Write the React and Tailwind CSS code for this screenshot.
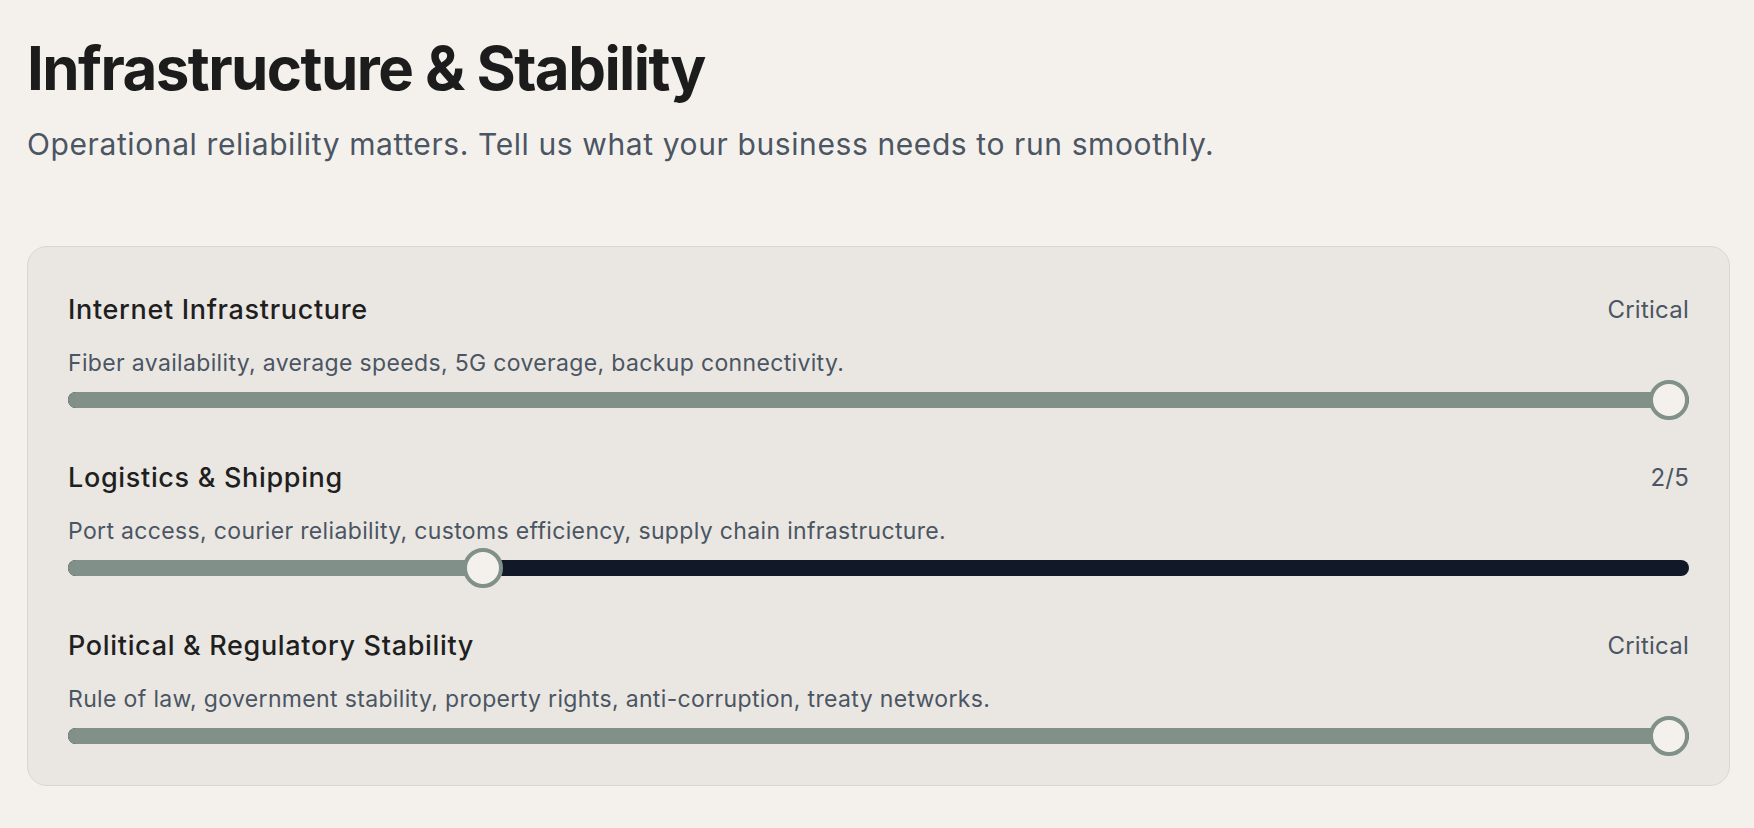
import { useState } from 'react';

const factors = [
  {
    id: 'internet',
    title: 'Internet Infrastructure',
    desc: 'Fiber availability, average speeds, 5G coverage, backup connectivity.',
    value: 5,
  },
  {
    id: 'logistics',
    title: 'Logistics & Shipping',
    desc: 'Port access, courier reliability, customs efficiency, supply chain infrastructure.',
    value: 2,
  },
  {
    id: 'political',
    title: 'Political & Regulatory Stability',
    desc: 'Rule of law, government stability, property rights, anti-corruption, treaty networks.',
    value: 5,
  },
];

function Slider({ value, min = 1, max = 5 }) {
  const pct = (value - min) / (max - min);
  // thumb stays inside the track: centre travels from 20px to (100% - 20px)
  const pos = `calc(20px + (100% - 40px) * ${pct})`;
  return (
    <div className="relative h-10 flex items-center">
      <div className="relative w-full h-4 rounded-full bg-[#111827] overflow-hidden">
        <div className="absolute left-0 top-0 h-full bg-[#819089]" style={{ width: pos }} />
      </div>
      <div
        className="absolute top-0 w-10 h-10 -ml-5 rounded-full bg-[#f4f1ec] border-4 border-[#819089]"
        style={{ left: pos }}
      />
    </div>
  );
}

export default function App() {
  const [items] = useState(factors);

  return (
    <div className="min-h-screen bg-[#f4f1ec] pl-[27px] pr-[24px] pt-[38px] pb-10 font-['Inter',sans-serif]">
      <h1 className="text-6xl font-bold tracking-[-0.026em] text-[#1c1c1c]">Infrastructure &amp; Stability</h1>
      <p className="mt-[28px] text-3xl text-[#4b5563] tracking-[0.02em]">
        Operational reliability matters. Tell us what your business needs to run smoothly.
      </p>

      <div className="mt-[84px] rounded-[20px] border border-[#d9d5cf] bg-[#eae7e2] px-10 pt-[45px] pb-[29px]">
        <div className="flex flex-col gap-[40px]">
          {items.map((f) => (
            <div key={f.id}>
              <div className="flex items-center justify-between h-9">
                <h3 className="text-[27px] font-medium tracking-[0.025em] text-[#1f1f1f]">{f.title}</h3>
                <span className="text-[24px] tracking-[0.01em] text-[#4b5563]">{f.value === 5 ? 'Critical' : `${f.value}/5`}</span>
              </div>
              <p className="mt-[19px] text-[23px] leading-8 text-[#4b5563] tracking-[0.015em]">{f.desc}</p>
              <div className="mt-[1px]">
                <Slider value={f.value} />
              </div>
            </div>
          ))}
        </div>
      </div>
    </div>
  );
}
